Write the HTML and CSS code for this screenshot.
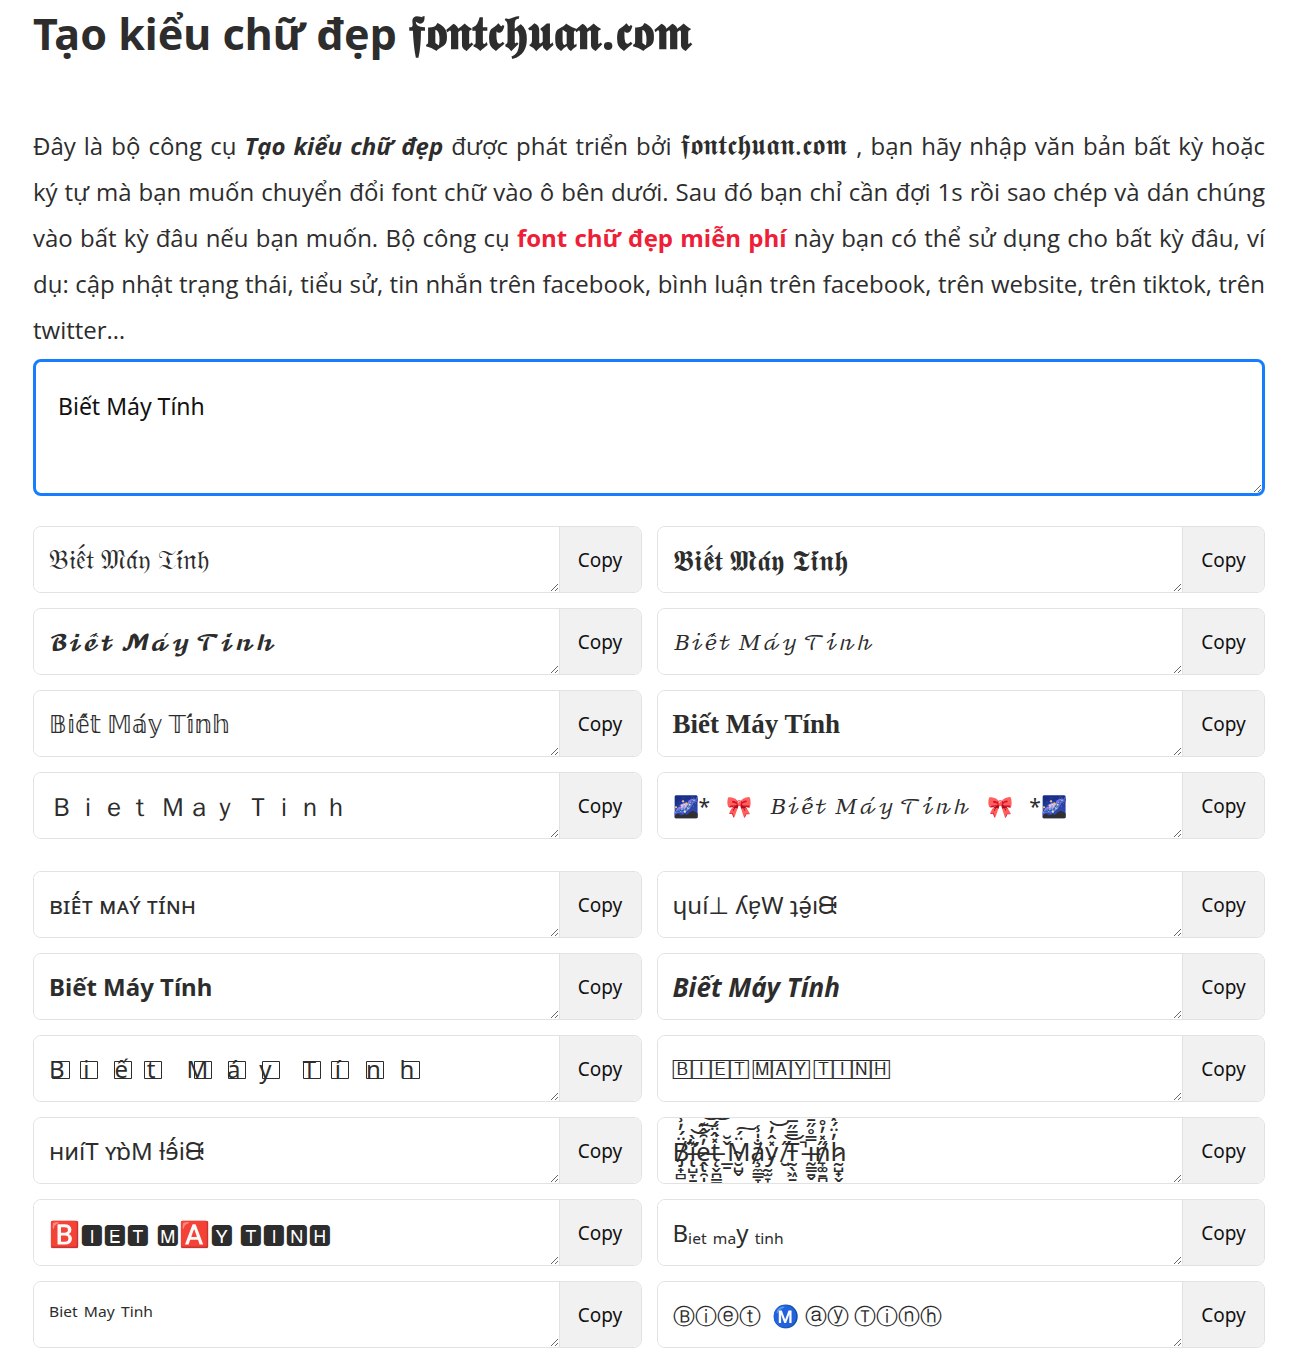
FILE: index.html
```html
<!DOCTYPE html>
<html lang="vi">
<head>
    <meta charset="UTF-8">
    <meta name="viewport" content="width=device-width, initial-scale=1.0">
    <title>Tạo kiểu chữ đẹp</title>
    <link rel="stylesheet" href="styles.css">
</head>
<body>
    <div class="container">
        <h1>Tạo kiểu chữ đẹp <span class="brand">𝖋𝖔𝖓𝖙𝖈𝖍𝖚𝖆𝖓.𝖈𝖔𝖒</span></h1>

        <p class="intro">Đây là bộ công cụ <strong><em>Tạo kiểu chữ đẹp</em></strong> được phát triển bởi <span class="brand">𝖋𝖔𝖓𝖙𝖈𝖍𝖚𝖆𝖓.𝖈𝖔𝖒</span> , bạn hãy nhập văn bản bất kỳ hoặc ký&nbsp;tự mà bạn muốn chuyển đổi font chữ vào ô bên dưới. Sau đó bạn chỉ cần đợi 1s rồi sao chép và dán chúng vào bất kỳ đâu nếu bạn muốn. Bộ công cụ <strong class="highlight">font chữ đẹp miễn phí</strong> này bạn có thể sử dụng cho bất kỳ đâu, ví dụ: cập nhật trạng thái, tiểu sử, tin nhắn trên facebook, bình luận trên facebook, trên website, trên tiktok, trên twitter…</p>

        <textarea class="source" aria-label="Văn bản">Biết Máy Tính</textarea>

        <div class="results">
            <div class="result"><textarea class="serif" aria-label="Fraktur">𝔅𝔦𝔢̂́𝔱 𝔐𝔞́𝔶 𝔗𝔦́𝔫𝔥</textarea><button>Copy</button></div>
            <div class="result"><textarea class="large" aria-label="Fraktur đậm">𝕭𝖎𝖊̂́𝖙 𝕸𝖆́𝖞 𝕿𝖎́𝖓𝖍</textarea><button>Copy</button></div>
            <div class="result"><textarea class="math" aria-label="Viết tay đậm">𝓑𝓲𝓮̂́𝓽 𝓜𝓪́𝔂 𝓣𝓲́𝓷𝓱</textarea><button>Copy</button></div>
            <div class="result"><textarea class="math" aria-label="Viết tay">𝐵𝒾𝑒̂́𝓉 𝑀𝒶́𝓎 𝒯𝒾́𝓃𝒽</textarea><button>Copy</button></div>
            <div class="result"><textarea aria-label="Nét đôi">𝔹𝕚𝕖̂́𝕥 𝕄𝕒́𝕪 𝕋𝕚́𝕟𝕙</textarea><button>Copy</button></div>
            <div class="result"><textarea class="serif bold" aria-label="Có chân đậm">Biết Máy Tính</textarea><button>Copy</button></div>
            <div class="result"><textarea class="wide" aria-label="Chữ rộng">Ｂｉｅｔ Ｍａｙ Ｔｉｎｈ</textarea><button>Copy</button></div>
            <div class="result"><textarea class="math" aria-label="Trang trí">🌌*   🎀   𝐵𝒾𝑒̂́𝓉 𝑀𝒶́𝓎 𝒯𝒾́𝓃𝒽   🎀   *🌌</textarea><button>Copy</button></div>
        </div>

        <div class="results">
            <div class="result"><textarea aria-label="Chữ hoa nhỏ">ʙɪᴇ̂́ᴛ ᴍᴀʏ́ ᴛɪ́ɴʜ</textarea><button>Copy</button></div>
            <div class="result"><textarea aria-label="Lộn ngược">ɥuí⊥ ʎɐ̗W ʇə̮́ıᙠ</textarea><button>Copy</button></div>
            <div class="result"><textarea class="bold" aria-label="Không chân đậm">Biết Máy Tính</textarea><button>Copy</button></div>
            <div class="result"><textarea class="wide bold italic" aria-label="Không chân đậm nghiêng">Biết Máy Tính</textarea><button>Copy</button></div>
            <div class="result">
                <textarea aria-label="Khung vuông">B   i    ế   t     M   á   y     T   í    n   h</textarea>
                <svg class="boxes" width="375" height="20" fill="none" stroke="#2d2d2d" aria-hidden="true">
                    <path d="M4.5 1.5h17v17h-17zM32.5 1.5h17v17h-17zM66.5 1.5h17v17h-17zM96.5 1.5h17v17h-17zM146.5 1.5h17v17h-17zM180.5 1.5h17v17h-17zM214.5 1.5h17v17h-17zM255.5 1.5h17v17h-17zM283.5 1.5h17v17h-17zM318.5 1.5h17v17h-17zM354.5 1.5h17v17h-17z"/>
                </svg>
                <button>Copy</button>
            </div>
            <div class="result"><textarea class="small" aria-label="Ô vuông">🄱🄸🄴🅃 🄼🄰🅈 🅃🄸🄽🄷</textarea><button>Copy</button></div>
            <div class="result"><textarea aria-label="Phản chiếu">ʜᴎíT ʏɒ̀M ƚɘ̂́iᙠ</textarea><button>Copy</button></div>
            <div class="result"><textarea class="wide" aria-label="Zalgo">B̸̡̛̟̻̈́̓̾̈͌i̵̢̛̺̞̱̯͊̀͝͠ḙ̷̢̯̩̪̓̑̂͊͝t̶̨̬̪̳̽̂̈́͘͝ ̲̱̌̆M̴̮̺̬̈́͠a̸̧̼͇̞̪̐̍̾y̷̰̫̞̩̽̂̓͝ ̸̮̋͝T̵̰̖͖̱̿̋̅̿̚ḭ̶̳̱̬̿̊̋̄n̸̞͚̱̪̋̽̓̊h̷̰̺̟̬̓̈́̽͝</textarea><button>Copy</button></div>
            <div class="result"><textarea class="squared" aria-label="Ô vuông đen">🅱️🅸🅴🆃 🅼🅰️🆈 🆃🅸🅽🅷</textarea><button>Copy</button></div>
            <div class="result"><textarea aria-label="Chỉ số dưới">Bᵢₑₜ ₘₐy ₜᵢₙₕ</textarea><button>Copy</button></div>
            <div class="result"><textarea aria-label="Chỉ số trên">ᴮⁱᵉᵗ ᴹᵃʸ ᵀⁱⁿʰ</textarea><button>Copy</button></div>
            <div class="result"><textarea class="circled" aria-label="Vòng tròn">Ⓑⓘⓔⓣ  Ⓜ️ ⓐⓨ Ⓣⓘⓝⓗ</textarea><button>Copy</button></div>
        </div>
    </div>
</body>
</html>
```
FILE: styles.css
```css
* {
    box-sizing: border-box;
}

body {
    margin: 0;
    background-color: #fff;
    color: #2d2d2d;
    font-family: 'Noto Sans', 'DejaVu Sans', sans-serif;
    font-size: 24px;
}

.container {
    padding: 4px 32px 8px 33px;
}

h1 {
    margin: 0 0 59px;
    font-size: 43px;
    line-height: 60px;
}

.brand {
    font-size: 29px;
    line-height: 1;
}

h1 .brand {
    font-size: 49px;
}

.intro {
    margin: 0 0 6px;
    font-family: 'Open Sans', 'Noto Sans', sans-serif;
    line-height: 46px;
    text-align: justify;
}

.highlight {
    color: #ee2038;
}

textarea,
button {
    font-family: inherit;
}

.source {
    display: block;
    width: 100%;
    height: 137px;
    padding: 27px 22px;
    border: 3px solid #177dff;
    border-radius: 8px;
    outline: none;
    color: #111;
    font-size: 23px;
    line-height: 34px;
}

.results {
    display: grid;
    grid-template-columns: 1fr 1fr;
    gap: 15px;
    margin-top: 30px;
}

.results + .results {
    margin-top: 32px;
}

.result {
    position: relative;
    display: flex;
    height: 67px;
    border: 1px solid #e2e2e2;
    border-radius: 8px;
    overflow: hidden;
}

.result textarea {
    flex: 1;
    min-width: 0;
    padding: 16px 15px;
    border: none;
    outline: none;
    overflow: hidden;
    color: #2d2d2d;
    font-size: 24px;
    line-height: 34px;
}

.result button {
    width: 82px;
    border: none;
    border-left: 1px solid #e2e2e2;
    background-color: #f1f1f1;
    color: #111;
    font-size: 19px;
    cursor: pointer;
}

/* text styles */
.result .large {
    font-size: 29px;
}

.result .wide {
    font-size: 26px;
}

.result .small {
    font-size: 17px;
}

.result .squared {
    font-size: 25px;
}

.result .circled {
    font-size: 22px;
}

.result .math {
    font-family: 'Noto Sans', 'DejaVu Math TeX Gyre', serif;
    font-size: 21px;
}

.result .serif {
    font-family: 'Liberation Serif', serif;
    font-size: 27px;
}

.result .bold {
    font-weight: bold;
}

.result .italic {
    font-style: italic;
}

/* squares drawn around the letters */
.boxes {
    position: absolute;
    top: 24px;
    left: 14px;
    pointer-events: none;
}
```
